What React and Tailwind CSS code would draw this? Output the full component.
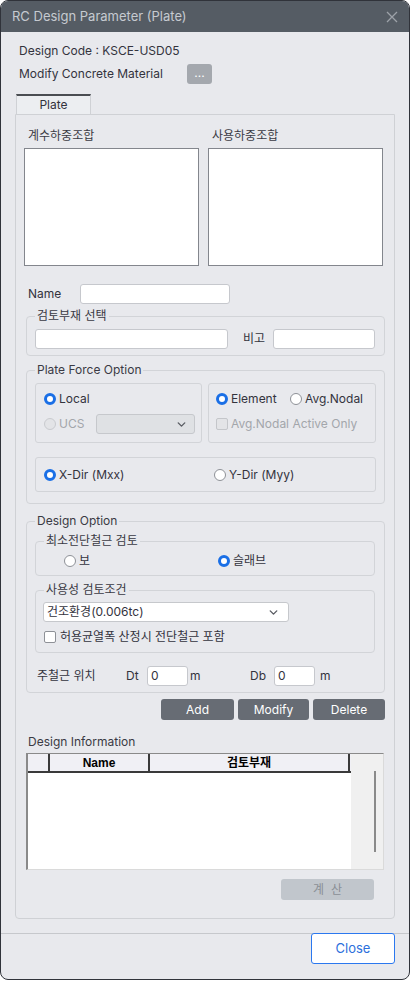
import React from "react";
import { ChevronDown } from "lucide-react";

const font = { fontFamily: "Inter, 'Noto Sans CJK KR', sans-serif" };

function Radio({ checked, disabled }) {
  if (checked)
    return <span className="w-[12px] h-[12px] rounded-full border-[3.5px] border-[#1a6fe6] bg-white shrink-0" />;
  if (disabled)
    return <span className="w-[12px] h-[12px] rounded-full border border-[#c9cbcf] bg-[#e3e4e7] shrink-0" />;
  return <span className="w-[12px] h-[12px] rounded-full border border-[#8e9197] bg-white shrink-0" />;
}

function Check({ disabled }) {
  return (
    <span
      className={
        "w-[12px] h-[12px] rounded-[2px] border shrink-0 " +
        (disabled ? "border-[#c4c6ca] bg-[#e3e4e7]" : "border-[#8e9197] bg-white")
      }
    />
  );
}

function Legend({ children }) {
  return <legend className="ml-[8px] px-[2px] h-[16px] leading-[16px] text-[#3a3a44]">{children}</legend>;
}

export default function App() {
  return (
    <div className="w-[411px] h-[982px] bg-white text-[12px] text-[#33333d]" style={font}>
      <div className="w-[410px] h-[980px] bg-[#e8e9ed] border border-[#30333a] rounded-[8px] overflow-hidden flex flex-col">
        {/* Title bar */}
        <div className="h-[31px] bg-[#555c64] flex items-center justify-between pl-[11px] pr-[11px] shrink-0">
          <span className="text-[13px] text-[#c6cad0]">RC Design Parameter (Plate)</span>
          <svg width="12" height="12" viewBox="0 0 12 12">
            <path d="M1 1 L11 11 M11 1 L1 11" stroke="#9da2a9" strokeWidth="1.3" />
          </svg>
        </div>

        {/* Header info */}
        <div className="pt-[9px] px-[18px]">
          <div className="h-[20px] flex items-center">Design Code : KSCE-USD05</div>
          <div className="h-[20px] mt-[3px] flex items-center">
            <span className="w-[168px]">Modify Concrete Material</span>
            <span className="w-[25px] h-[20px] rounded-[3px] bg-[#a4a8ae] text-white flex items-center justify-center leading-none pb-[3px]">
              ...
            </span>
          </div>
        </div>

        {/* Tab */}
        <div className="mt-[10px] ml-[15px] w-[75px] h-[20px] border-t-2 border-[#4a4d52] border-x border-x-[#cfd1d5] bg-[#eceef1] flex items-center justify-center">
          Plate
        </div>

        {/* Panel */}
        <div className="mx-[14px] h-[805px] border border-[#cfd1d5] rounded-b-[4px] flex flex-col">
          {/* Load combo lists */}
          <div className="mt-[13px] ml-[8px] flex gap-[9px]">
            <div className="w-[175px] flex flex-col">
              <span className="pl-[4px] h-[16px] leading-[16px] text-[#3a3a44]">계수하중조합</span>
              <div className="mt-[4px] h-[118px] bg-white border border-[#83868d]" />
            </div>
            <div className="w-[175px] flex flex-col">
              <span className="pl-[4px] h-[16px] leading-[16px] text-[#3a3a44]">사용하중조합</span>
              <div className="mt-[4px] h-[118px] bg-white border border-[#83868d]" />
            </div>
          </div>

          {/* Name */}
          <div className="mt-[18px] ml-[12px] h-[20px] flex items-center">
            <span className="w-[52px]">Name</span>
            <div className="w-[150px] h-[20px] bg-white border border-[#c6c8cd] rounded-[3px]" />
          </div>

          <div className="ml-[10px] mr-[9px] flex flex-col">
            {/* 검토부재 선택 */}
            <fieldset className="mt-[4px] border border-[#d2d4d8] rounded-[4px] pb-[6px]">
              <Legend>검토부재 선택</Legend>
              <div className="mt-[5px] pl-[8px] flex items-center h-[20px]">
                <div className="w-[193px] h-[20px] bg-white border border-[#c6c8cd] rounded-[3px]" />
                <span className="ml-[15px] w-[30px]">비고</span>
                <div className="w-[102px] h-[20px] bg-white border border-[#c6c8cd] rounded-[3px]" />
              </div>
            </fieldset>

            {/* Plate Force Option */}
            <fieldset className="mt-[6px] border border-[#d2d4d8] rounded-[4px] pb-[11px]">
              <Legend>Plate Force Option</Legend>
              <div className="mt-[5px] pl-[8px] flex gap-[6px]">
                <div className="w-[167px] h-[60px] border border-[#d2d4d8] rounded-[3px] pl-[8px] pr-[6px] pt-[7px]">
                  <div className="h-[16px] flex items-center gap-[3px]">
                    <Radio checked />
                    <span>Local</span>
                  </div>
                  <div className="mt-[7px] h-[20px] flex items-center justify-between">
                    <div className="flex items-center gap-[3px]">
                      <Radio disabled />
                      <span className="text-[#a3a6ab]">UCS</span>
                    </div>
                    <div className="w-[99px] h-[20px] bg-[#dfe1e4] border border-[#c6c8cc] rounded-[3px] flex items-center justify-end pr-[6px]">
                      <ChevronDown size={13} strokeWidth={2.6} color="#5a5d63" />
                    </div>
                  </div>
                </div>
                <div className="w-[168px] h-[60px] border border-[#d2d4d8] rounded-[3px] pl-[7px] pt-[7px]">
                  <div className="h-[16px] flex items-center">
                    <div className="w-[74px] flex items-center gap-[3px]">
                      <Radio checked />
                      <span>Element</span>
                    </div>
                    <div className="flex items-center gap-[3px]">
                      <Radio />
                      <span>Avg.Nodal</span>
                    </div>
                  </div>
                  <div className="mt-[7px] h-[20px] flex items-center gap-[3px]">
                    <Check disabled />
                    <span className="text-[#a3a6ab]">Avg.Nodal Active Only</span>
                  </div>
                </div>
              </div>
              <div className="mt-[14px] ml-[8px] w-[341px] h-[35px] border border-[#d2d4d8] rounded-[3px] pl-[8px] flex items-center">
                <div className="w-[170px] flex items-center gap-[3px]">
                  <Radio checked />
                  <span>X-Dir (Mxx)</span>
                </div>
                <div className="flex items-center gap-[3px]">
                  <Radio />
                  <span>Y-Dir (Myy)</span>
                </div>
              </div>
            </fieldset>

            {/* Design Option */}
            <fieldset className="mt-[9px] border border-[#d2d4d8] rounded-[4px] pb-[6px]">
              <Legend>Design Option</Legend>
              <fieldset className="mt-[4px] ml-[8px] mr-[9px] border border-[#d2d4d8] rounded-[4px] pb-[6px]">
                <Legend>최소전단철근 검토</Legend>
                <div className="mt-[4px] h-[16px] pl-[28px] flex items-center">
                  <div className="w-[154px] flex items-center gap-[3px]">
                    <Radio />
                    <span>보</span>
                  </div>
                  <div className="flex items-center gap-[3px]">
                    <Radio checked />
                    <span>슬래브</span>
                  </div>
                </div>
              </fieldset>
              <fieldset className="mt-[6px] ml-[8px] mr-[9px] border border-[#d2d4d8] rounded-[4px] pb-[7px]">
                <Legend>사용성 검토조건</Legend>
                <div className="mt-[4px] ml-[7px] w-[246px] h-[20px] bg-white border border-[#c6c8cc] rounded-[3px] flex items-center justify-between pl-[3px] pr-[8px]">
                  <span>건조환경(0.006tc)</span>
                  <ChevronDown size={13} strokeWidth={2.6} color="#5a5d63" />
                </div>
                <div className="mt-[7px] h-[16px] pl-[8px] flex items-center gap-[4px]">
                  <Check />
                  <span>허용균열폭 산정시 전단철근 포함</span>
                </div>
              </fieldset>
              <div className="mt-[13px] h-[20px] pl-[10px] flex items-center">
                <span className="w-[89px]">주철근 위치</span>
                <span className="w-[21px]">Dt</span>
                <div className="w-[41px] h-[20px] bg-white border border-[#c6c8cd] rounded-[3px] flex items-center pl-[3px]">0</div>
                <span className="ml-[2px] w-[60px]">m</span>
                <span className="w-[24px]">Db</span>
                <div className="w-[41px] h-[20px] bg-white border border-[#c6c8cd] rounded-[3px] flex items-center pl-[3px]">0</div>
                <span className="ml-[5px]">m</span>
              </div>
            </fieldset>

            {/* Buttons */}
            <div className="mt-[6px] h-[21px] flex justify-end gap-[4px]">
              <div className="w-[73px] h-[21px] rounded-[3px] bg-[#676c74] text-white flex items-center justify-center">Add</div>
              <div className="w-[71px] h-[21px] rounded-[3px] bg-[#676c74] text-white flex items-center justify-center">Modify</div>
              <div className="w-[72px] h-[21px] rounded-[3px] bg-[#676c74] text-white flex items-center justify-center">Delete</div>
            </div>

            {/* Design Information */}
            <div className="mt-[14px] ml-[2px] h-[16px] leading-[16px] text-[#3a3a44]">Design Information</div>
            <div className="mt-[3px] w-[358px] h-[117px] bg-white border-l-2 border-t border-l-[#8a8a8a] border-t-[#8a8a8a] border-r border-b border-r-[#dadada] border-b-[#dadada] flex">
              <div className="w-[323px] flex flex-col">
                <div
                  className="h-[19px] flex bg-[#f0f0f5] border-b-2 border-[#3a3a3a] text-black font-bold"
                  style={{ fontFamily: "'Liberation Sans', 'Noto Sans CJK KR', sans-serif" }}
                >
                  <div className="w-[22px] border-r-2 border-[#3a3a3a]" />
                  <div className="w-[100px] border-r-2 border-[#3a3a3a] flex items-center justify-center">Name</div>
                  <div className="w-[200px] border-r-2 border-[#3a3a3a] flex items-center justify-center">검토부재</div>
                </div>
              </div>
              <div className="flex-1 bg-[#f0f0f0] relative">
                <div className="absolute left-[23px] top-[17px] w-[2px] h-[81px] bg-[#8a8a8a]" />
              </div>
            </div>

            <div className="mt-[9px] mr-[11px] self-end w-[93px] h-[21px] rounded-[3px] bg-[#c1c6cc] text-[#8a8f96] flex items-center justify-center gap-[7px]">
              <span>계</span>
              <span>산</span>
            </div>
          </div>
        </div>

        {/* Footer */}
        <div className="mt-[14px] border-t border-[#c6c8cc] flex justify-end pr-[14px]">
          <div className="-mt-px w-[84px] h-[31px] bg-white border border-[#2b78ef] rounded-[3px] flex items-center justify-center text-[13px] text-[#2c6fdc]">
            Close
          </div>
        </div>
      </div>
    </div>
  );
}
